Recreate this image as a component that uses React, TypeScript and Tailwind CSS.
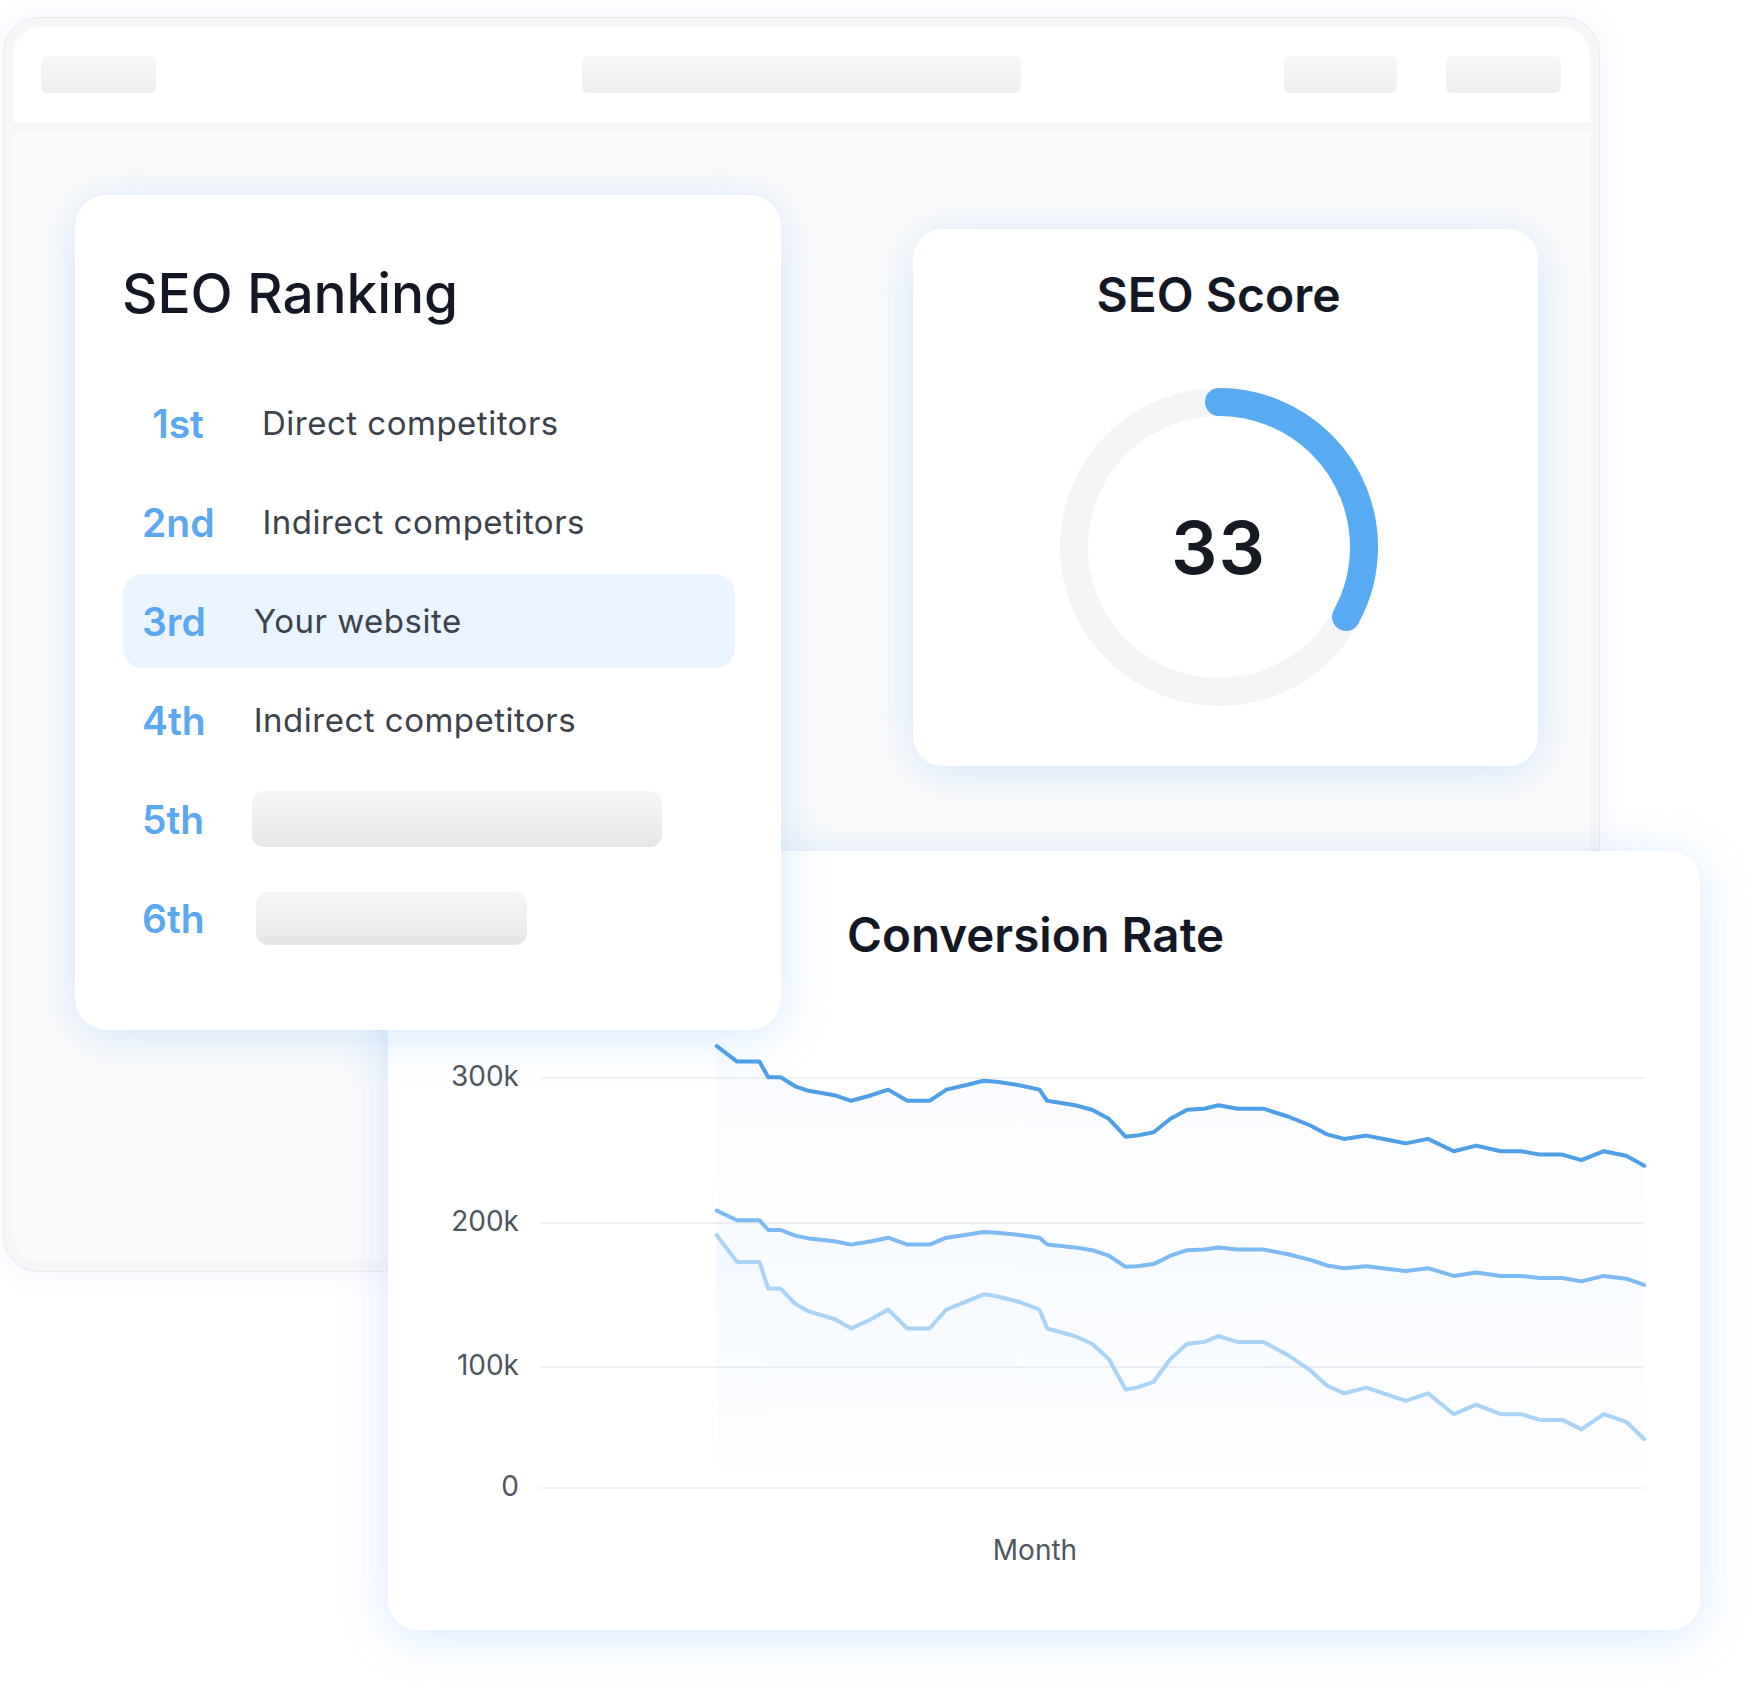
import React from "react";

const topDisplay: [number, number][] = [
  [640, 933], [658, 947], [678, 947], [686, 961], [697, 961], [710, 969], [722, 973], [745, 977],
  [760, 982], [778, 977], [793, 972], [810, 982], [830, 982], [845, 972], [862, 968], [878, 964],
  [890, 965], [910, 968], [928, 972], [935, 982], [960, 986], [975, 990], [990, 998], [1005, 1014],
  [1015, 1013], [1030, 1010], [1045, 998], [1060, 990], [1075, 989], [1088, 986], [1105, 989],
  [1128, 989], [1150, 996], [1170, 1004], [1185, 1012], [1200, 1016], [1220, 1013], [1240, 1017],
  [1255, 1020], [1275, 1016], [1298, 1027], [1318, 1022], [1340, 1027], [1358, 1027], [1375, 1030],
  [1395, 1030], [1412, 1035], [1432, 1027], [1452, 1031], [1468, 1040],
];

const S = 1.12;
const CARD_X = 388;
const CHART_Y = 1030;

function series(base: number, amp: number): [number, number][] {
  return topDisplay.map(([x, y]) => [x * S - CARD_X, (base + (y - 933) * amp) * S - CHART_Y]);
}

function toPath(pts: [number, number][]) {
  return pts.map(([x, y], i) => `${i === 0 ? "M" : "L"}${x.toFixed(1)} ${y.toFixed(1)}`).join(" ");
}

function toArea(pts: [number, number][], bottom: number) {
  const first = pts[0];
  const last = pts[pts.length - 1];
  return `${toPath(pts)} L${last[0].toFixed(1)} ${bottom} L${first[0].toFixed(1)} ${bottom} Z`;
}

const lines = [
  { pts: series(933, 1), color: "#4d9fe8", id: "g1" },
  { pts: series(1080, 0.62), color: "#7bbaf3", id: "g2" },
  { pts: series(1102, 1.7), color: "#aad3f8", id: "g3" },
];

const grid = [
  { y: 47, label: "300k" },
  { y: 192, label: "200k" },
  { y: 336, label: "100k" },
  { y: 457, label: "0" },
];

const rows: { rank: string; text?: string; center?: boolean; highlight?: boolean; bar?: string }[] = [
  { rank: "1st", text: "Direct competitors", center: true },
  { rank: "2nd", text: "Indirect competitors" },
  { rank: "3rd", text: "Your website", highlight: true },
  { rank: "4th", text: "Indirect competitors" },
  { rank: "5th", bar: "w-[410px] h-[56px]" },
  { rank: "6th", bar: "w-[271px] h-[53px] ml-[3px]" },
];

function Placeholder({ className }: { className: string }) {
  return <div className={`rounded-[6px] bg-gradient-to-b from-[#f7f7f7] to-[#eeeeee] ${className}`} />;
}

function RankingCard() {
  return (
    <div className="absolute left-[75px] top-[195px] z-30 w-[706px] h-[835px] rounded-[32px] bg-white shadow-[0_6px_48px_rgba(96,165,250,0.26)] pl-[48px] pr-[46px] pt-[71px] flex flex-col">
      <div className="ml-[-1px] text-[55px] leading-none font-medium text-[#141824] tracking-[-0.1px]">SEO Ranking</div>
      <div className="mt-[55px] flex flex-col gap-[5px]">
        {rows.map((r) => (
          <div
            key={r.rank}
            className={`flex items-center h-[94px] pl-[19px] gap-[48px] rounded-[20px] ${r.highlight ? "bg-[#eaf4fe]" : ""}`}
          >
            <div
              className={`text-[39px] leading-none font-semibold text-[#5aa8ef] ${r.center ? "w-[72px] text-center" : ""}`}
            >
              {r.rank}
            </div>
            {r.text ? (
              <div className="text-[33px] leading-none text-[#3c424b] tracking-[0.5px]">{r.text}</div>
            ) : (
              <div className={`rounded-[12px] bg-gradient-to-b from-[#f6f6f6] to-[#e6e6e6] ${r.bar}`} />
            )}
          </div>
        ))}
      </div>
    </div>
  );
}

function ScoreCard() {
  const r = 145;
  const c = 2 * Math.PI * r;
  const dash = c * 0.33;
  return (
    <div className="absolute left-[913px] top-[229px] z-10 w-[625px] h-[537px] rounded-[30px] bg-white shadow-[0_6px_48px_rgba(96,165,250,0.26)] pt-[42px] pr-[14px] flex flex-col items-center">
      <div className="text-[48px] leading-none font-semibold text-[#141824]">SEO Score</div>
      <div className="mt-[68px] grid place-items-center">
        <svg width="320" height="320" viewBox="0 0 320 320" className="[grid-area:1/1]">
          <circle cx="160" cy="160" r={r} fill="none" stroke="#f4f4f4" strokeWidth="28" />
          <circle
            cx="160"
            cy="160"
            r={r}
            fill="none"
            stroke="#58aaf3"
            strokeWidth="28"
            strokeLinecap="round"
            strokeDasharray={`${dash} ${c}`}
            transform="rotate(-90 160 160)"
          />
        </svg>
        <div className="[grid-area:1/1] text-[73px] leading-none font-semibold text-[#161a22] tracking-[1px]">33</div>
      </div>
    </div>
  );
}

function ConversionCard() {
  return (
    <div className="absolute left-[388px] top-[851px] z-20 w-[1312px] h-[779px] rounded-[30px] bg-white shadow-[0_6px_48px_rgba(96,165,250,0.26)] pt-[60px] flex flex-col">
      <div className="pl-[459px] text-[47.5px] leading-none font-semibold text-[#141824]">Conversion Rate</div>
      <svg width="1312" height="480" viewBox="0 0 1312 480" className="mt-[72px] block">
        <defs>
          {lines.map((l) => (
            <linearGradient key={l.id} id={l.id} x1="0" y1="0" x2="0" y2="1">
              <stop offset="0%" stopColor="#60a5fa" stopOpacity="0.035" />
              <stop offset="100%" stopColor="#60a5fa" stopOpacity="0" />
            </linearGradient>
          ))}
        </defs>
        {grid.map((g) => (
          <g key={g.label}>
            <line x1="153" x2="1256" y1={g.y} y2={g.y} stroke="#f1f1f3" strokeWidth="2" />
            <text
              x="131"
              y={g.y}
              textAnchor="end"
              dominantBaseline="middle"
              fontSize="28"
              fill="#50565e"
              fontFamily="Inter, sans-serif"
            >
              {g.label}
            </text>
          </g>
        ))}
        {lines.map((l) => (
          <path key={l.id + "a"} d={toArea(l.pts, 457)} fill={`url(#${l.id})`} />
        ))}
        {lines.map((l) => (
          <path
            key={l.id}
            d={toPath(l.pts)}
            fill="none"
            stroke={l.color}
            strokeWidth="4"
            strokeLinejoin="round"
            strokeLinecap="round"
          />
        ))}
      </svg>
      <div className="mt-[25px] w-full text-center pr-[18px] text-[28px] leading-none text-[#50565e]">Month</div>
    </div>
  );
}

export default function App() {
  return (
    <div className="relative w-[1758px] h-[1687px] overflow-hidden bg-white font-['Inter',sans-serif]">
      <div className="ml-[3px] pt-[17px]">
        <div className="w-[1597px] h-[1255px] rounded-[36px] border border-[#ebe8f3] bg-[#f6f6f6] p-[9px] flex flex-col gap-[10px] shadow-[0_0_28px_rgba(167,139,250,0.12)]">
          <div className="h-[95px] rounded-t-[28px] bg-white px-[28px] grid grid-cols-3 items-center">
            <div className="flex justify-start">
              <Placeholder className="w-[115px] h-[37px]" />
            </div>
            <div className="flex justify-center">
              <Placeholder className="w-[439px] h-[37px]" />
            </div>
            <div className="flex justify-end gap-[49px] pr-[1px]">
              <Placeholder className="w-[113px] h-[37px]" />
              <Placeholder className="w-[115px] h-[37px]" />
            </div>
          </div>
          <div className="flex-1 rounded-b-[28px] bg-[#fafafa]" />
        </div>
      </div>
      <ScoreCard />
      <ConversionCard />
      <RankingCard />
    </div>
  );
}
